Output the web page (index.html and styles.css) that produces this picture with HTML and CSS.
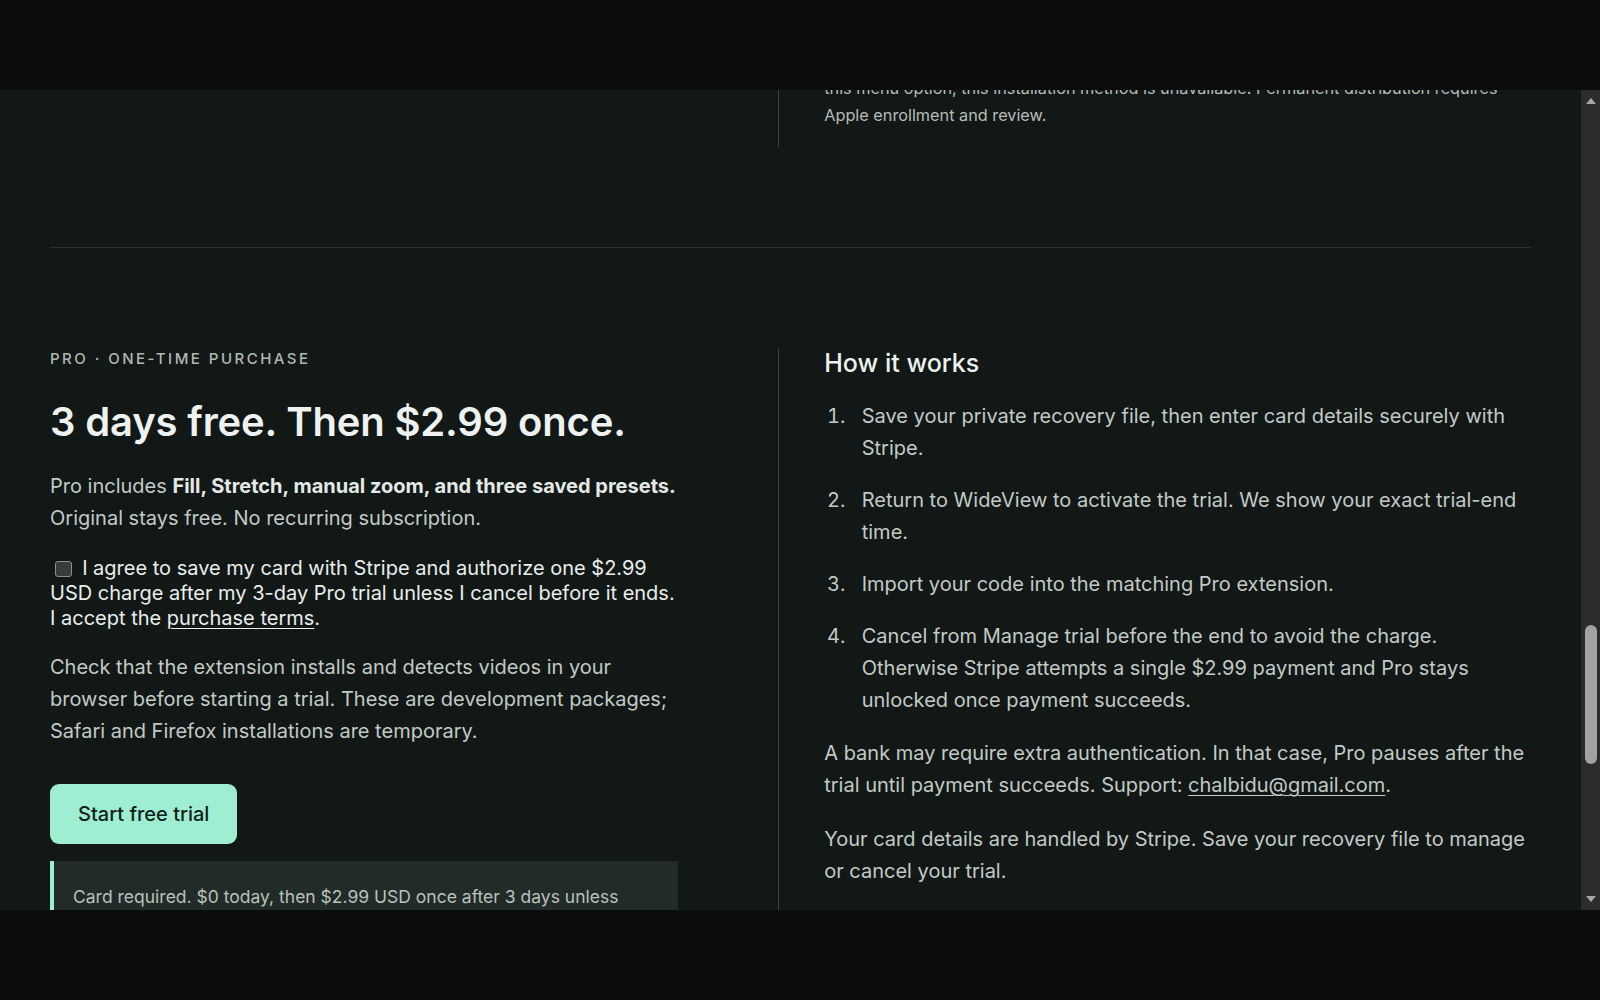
FILE: index.html
```html
<!DOCTYPE html>
<html lang="en">
<head>
<meta charset="utf-8">
<title>WideView Pro</title>
<link rel="stylesheet" href="styles.css">
</head>
<body>
<div class="screen">
  <div class="viewport">
    <main class="page">
      <section class="section section-install">
        <div class="col col-left">
          <p class="eyebrow">Free · Original mode</p>
          <h2 class="title">Install WideView</h2>
          <p class="text">Original mode is free forever in every supported browser.</p>
        </div>
        <div class="col col-right">
          <h3 class="subtitle">Installing in Safari</h3>
          <ol class="steps">
            <li>Download the Safari package and unzip it.</li>
            <li>Open Safari settings and enable the developer features.</li>
          </ol>
          <p class="fine">Safari may ask you to enable Allow Unsigned Extensions again after each restart. If it lacks this menu option, this installation method is unavailable. Permanent distribution requires Apple enrollment and review.</p>
        </div>
      </section>

      <section class="section section-pro">
        <div class="col col-left">
          <p class="eyebrow">Pro · One-time purchase</p>
          <h2 class="title">3 days free. Then $2.99 once.</h2>
          <p class="text">Pro includes <strong>Fill, Stretch, manual zoom, and three saved presets.</strong> Original stays free. No recurring subscription.</p>
          <label class="consent"><input type="checkbox" class="check"> I agree to save my card with Stripe and authorize one $2.99 USD charge after my 3-day Pro trial unless I cancel before it ends. I accept the <a class="link" href="#terms">purchase terms</a>.</label>
          <p class="text">Check that the extension installs and detects videos in your browser before starting a trial. These are development packages; Safari and Firefox installations are temporary.</p>
          <button class="btn" type="button">Start free trial</button>
          <div class="note">Card required. $0 today, then $2.99 USD once after 3 days unless cancelled from Manage trial.</div>
        </div>
        <div class="col col-right">
          <h3 class="subtitle">How it works</h3>
          <ol class="steps">
            <li>Save your private recovery file, then enter card details securely with Stripe.</li>
            <li>Return to WideView to activate the trial. We show your exact trial-end time.</li>
            <li>Import your code into the matching Pro extension.</li>
            <li>Cancel from Manage trial before the end to avoid the charge. Otherwise Stripe attempts a single $2.99 payment and Pro stays unlocked once payment succeeds.</li>
          </ol>
          <p class="text">A bank may require extra authentication. In that case, Pro pauses after the trial until payment succeeds. Support: <a class="link" href="mailto:chalbidu@gmail.com">chalbidu@gmail.com</a>.</p>
          <p class="text">Your card details are handled by Stripe. Save your recovery file to manage or cancel your trial.</p>
        </div>
      </section>

      <footer class="footer">
        <p class="fine">© WideView · Purchase terms · Privacy</p>
      </footer>
    </main>
  </div>
  <div class="scrollbar" aria-hidden="true">
    <div class="sb-btn sb-up"></div>
    <div class="sb-track">
      <div class="sb-space"></div>
      <div class="sb-thumb"></div>
    </div>
    <div class="sb-btn sb-down"></div>
  </div>
</div>
<script src="script.js"></script>
</body>
</html>
```

FILE: styles.css
```css
* { box-sizing: border-box; }

html, body { margin: 0; padding: 0; }

body {
  background: #0b0c0e;
  font-family: Inter, "Noto Sans", "Liberation Sans", sans-serif;
  color: #c3cac6;
}

.screen {
  display: flex;
  height: 820px;
  margin-top: 90px;
}

.viewport {
  flex: 1;
  min-width: 0;
  overflow: hidden;
  background: #111816;
}

.page { padding: 0 50px; }

.section {
  display: grid;
  grid-template-columns: 5fr 6fr;
  column-gap: 100px;
  padding: 100px 0;
}

.section + .section { border-top: 1px solid #24342f; }

.col { min-width: 0; }

.col-right {
  border-left: 1px solid #34453f;
  padding-left: 45.5px;
}

.eyebrow {
  margin: 0;
  font-size: 15px;
  line-height: 1.5;
  letter-spacing: 0.165em;
  text-transform: uppercase;
  font-weight: 500;
  color: #b0b8b4;
}

.title {
  margin: 30px 0 26px;
  font-size: 40px;
  line-height: 1.1;
  font-weight: 600;
  letter-spacing: -0.004em;
  color: #eef2f0;
}

.text {
  margin: 0 0 22px;
  font-size: 20px;
  line-height: 1.6;
}

.text strong { color: #e4e9e6; font-weight: 700; }

.consent {
  display: block;
  margin: 0 0 20px;
  font-size: 20px;
  line-height: 1.25;
  color: #eaeeec;
}

.check {
  appearance: none;
  -webkit-appearance: none;
  width: 16.5px;
  height: 16.5px;
  margin: 0 5px 0 5px;
  vertical-align: -2px;
  border: 1.5px solid #8d8f8e;
  border-radius: 3px;
  background: #3a3b3b;
}

.link {
  color: inherit;
  text-decoration: underline;
  text-underline-offset: 3px;
  text-decoration-thickness: 1px;
}

.btn {
  display: block;
  margin-top: 37px;
  height: 60px;
  padding: 0 28px;
  border: 0;
  border-radius: 9px;
  background: #9eeed2;
  color: #10201a;
  font-family: inherit;
  font-size: 20px;
  font-weight: 500;
}

.note {
  margin-top: 17px;
  padding: 22px 19px;
  background: #212c28;
  border-left: 4.5px solid #9eeed2;
  font-size: 17.5px;
  line-height: 1.6;
  color: #b9c1bd;
}

.subtitle {
  margin: 0 0 22px;
  font-size: 25px;
  line-height: 1.2;
  font-weight: 500;
  color: #edf1ef;
}

.steps {
  margin: 0 0 21px;
  padding-left: 26.5px;
  font-size: 20px;
  line-height: 1.6;
}

.steps li { margin-bottom: 20px; padding-left: 11px; }

.fine {
  margin: 0 0 17px;
  font-size: 16.25px;
  line-height: 1.7;
  color: #b6bdb9;
}

.footer {
  border-top: 1px solid #24342f;
  padding: 40px 0 60px;
}

/* scrollbar of the scrolled window */
.scrollbar {
  width: 19px;
  flex: none;
  display: flex;
  flex-direction: column;
  background: #2b2c2c;
}

.sb-btn {
  height: 20px;
  flex: none;
  display: flex;
  align-items: center;
  justify-content: center;
}

.sb-btn::before {
  content: "";
  width: 0;
  height: 0;
  border-left: 5.5px solid transparent;
  border-right: 5.5px solid transparent;
}

.sb-up::before { border-bottom: 6px solid #a7a7a7; margin-top: 2px; }
.sb-down::before { border-top: 6px solid #a7a7a7; margin-bottom: 2px; }

.sb-track {
  flex: 1;
  display: flex;
  flex-direction: column;
  padding: 0 3px 0 4px;
}

.sb-space { height: 515px; flex: none; }

.sb-thumb {
  height: 139px;
  flex: none;
  border-radius: 6px;
  background: #a2a2a2;
}
```

FILE: script.js
```js
(function () {
  function place() {
    var vp = document.querySelector('.viewport');
    var pro = document.querySelector('.section-pro');
    if (!vp || !pro) return;
    var offset = pro.getBoundingClientRect().top - vp.getBoundingClientRect().top + vp.scrollTop;
    vp.scrollTop = offset - 157;
  }
  place();
  if (document.fonts && document.fonts.ready) document.fonts.ready.then(place);
  window.addEventListener('load', place);
})();
```
